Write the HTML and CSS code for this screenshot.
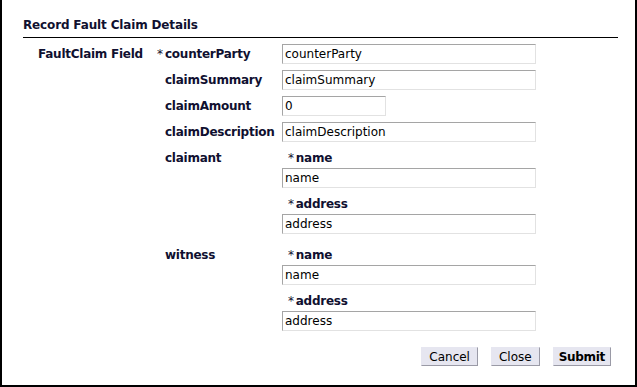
FILE: index.html
```html
<!DOCTYPE html>
<html lang="en">
<head>
    <meta charset="UTF-8">
    <meta name="viewport" content="width=device-width, initial-scale=1.0">
    <title>Record Fault Claim Details</title>
    <link rel="stylesheet" href="styles.css">
</head>
<body>

    <div class="frame">
        <form id="faultClaimForm" class="panel">
            <h2 class="title">Record Fault Claim Details</h2>

            <div class="group">
                <div class="group-label">FaultClaim Field</div>

                <div class="fields">
                    <div class="field">
                        <label class="field-label" for="counterParty"><span class="req">*</span>counterParty</label>
                        <input type="text" id="counterParty" class="text long" value="counterParty">
                    </div>

                    <div class="field">
                        <label class="field-label" for="claimSummary">claimSummary</label>
                        <input type="text" id="claimSummary" class="text long" value="claimSummary">
                    </div>

                    <div class="field">
                        <label class="field-label" for="claimAmount">claimAmount</label>
                        <input type="text" id="claimAmount" class="text short" value="0">
                    </div>

                    <div class="field">
                        <label class="field-label" for="claimDescription">claimDescription</label>
                        <input type="text" id="claimDescription" class="text long" value="claimDescription">
                    </div>

                    <div class="field nested">
                        <div class="field-label">claimant</div>
                        <div class="sub-fields">
                            <label class="sub-label" for="claimantName"><span class="req">*</span>name</label>
                            <input type="text" id="claimantName" class="text long" value="name">
                            <label class="sub-label" for="claimantAddress"><span class="req">*</span>address</label>
                            <input type="text" id="claimantAddress" class="text long" value="address">
                        </div>
                    </div>

                    <div class="field nested">
                        <div class="field-label">witness</div>
                        <div class="sub-fields">
                            <label class="sub-label" for="witnessName"><span class="req">*</span>name</label>
                            <input type="text" id="witnessName" class="text long" value="name">
                            <label class="sub-label" for="witnessAddress"><span class="req">*</span>address</label>
                            <input type="text" id="witnessAddress" class="text long" value="address">
                        </div>
                    </div>
                </div>
            </div>

            <div class="actions">
                <button type="button" class="btn">Cancel</button>
                <button type="button" class="btn">Close</button>
                <button type="submit" class="btn primary">Submit</button>
            </div>
        </form>
    </div>

</body>
</html>
```

FILE: styles.css
```css
body {
    margin: 0;
    font-family: "DejaVu Sans", Verdana, sans-serif;
    font-size: 12px;
    color: #000;
    background-color: #fff;
}
.frame {
    width: 637px;
    height: 387px;
    box-sizing: border-box;
    border: 2px solid #000;
    border-top: none;
}
.panel {
    padding: 18px 17px 0 21px;
}
.title {
    margin: 0;
    padding-bottom: 5px;
    font-size: 12px;
    font-weight: bold;
    letter-spacing: -0.15px;
    color: #101030;
    border-bottom: 1px solid #000;
}
.group {
    display: flex;
    padding-top: 6px;
}
.group-label {
    width: 119px;
    padding-left: 15px;
    line-height: 20px;
    font-weight: bold;
    letter-spacing: -0.25px;
    color: #101030;
}
.fields {
    display: flex;
    flex-direction: column;
    gap: 6px;
}
.field {
    display: flex;
    align-items: flex-start;
}
.field.nested + .field.nested {
    margin-top: 5px;
}
.field-label {
    width: 117px;
    padding-left: 8px;
    line-height: 20px;
    font-weight: bold;
    letter-spacing: -0.25px;
    color: #101030;
    position: relative;
}
.field-label .req {
    position: absolute;
    left: 0;
    font-weight: normal;
}
.sub-fields {
    display: flex;
    flex-direction: column;
}
.sub-label {
    padding-left: 6px;
    line-height: 20px;
    font-weight: bold;
    letter-spacing: -0.25px;
    color: #101030;
}
.sub-label .req {
    font-weight: normal;
    margin-right: 2px;
}
.sub-label ~ .sub-label {
    margin-top: 6px;
}
.text {
    height: 20px;
    box-sizing: border-box;
    padding: 0 2px;
    margin: 0;
    font-family: "DejaVu Sans", Verdana, sans-serif;
    font-size: 12px;
    color: #000;
    border: 1px solid;
    border-color: #a5a5a5 #e2e2e2 #e2e2e2 #a5a5a5;
}
.long {
    width: 254px;
}
.short {
    width: 104px;
}
.actions {
    display: flex;
    justify-content: flex-end;
    gap: 13px;
    padding: 16px 7px 0 0;
}
.btn {
    height: 19px;
    padding: 0 7px;
    font-family: "DejaVu Sans", Verdana, sans-serif;
    font-size: 12px;
    color: #000;
    background-color: #e6e6f0;
    border: 1px solid;
    border-color: #e6e6f0 #9a9aa6 #9a9aa6 #e6e6f0;
    border-radius: 0;
    cursor: pointer;
}
.btn.primary {
    padding: 0 5px;
    font-weight: bold;
    letter-spacing: -0.3px;
}
```
